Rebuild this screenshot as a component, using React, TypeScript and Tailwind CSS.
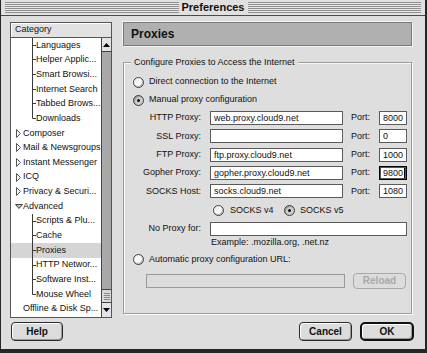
import React from "react";

const STRIPES =
  "h-[11px] flex-1 bg-[repeating-linear-gradient(to_bottom,#8f8f8f_0px,#8f8f8f_1px,#e8e8e8_1px,#e8e8e8_2px)]";

function Radio({ checked }: { checked?: boolean }) {
  return (
    <span
      className={
        "w-[11px] h-[11px] rounded-full border border-[#3c3c3c] flex items-center justify-center shrink-0 " +
        (checked
          ? "bg-[#cdcdcd] shadow-[inset_1px_1px_0_#9a9a9a]"
          : "bg-[#f6f6f6] shadow-[inset_-1px_-1px_0_#bdbdbd]")
      }
    >
      {checked && <span className="w-[3px] h-[3px] rounded-full bg-[#111]" />}
    </span>
  );
}

function Field({
  w,
  text,
  focused,
  disabled,
}: {
  w: string;
  text?: string;
  focused?: boolean;
  disabled?: boolean;
}) {
  return (
    <div
      className={
        w +
        " h-[14px] border flex items-center pl-[3px] text-[9px] leading-[12px] text-[#111] whitespace-nowrap overflow-hidden " +
        (focused
          ? "border-black shadow-[inset_0_0_0_1px_#555] bg-white"
          : disabled
          ? "border-[#9a9a9a] bg-[#dcdcdc]"
          : "border-[#5a5a5a] bg-white")
      }
    >
      {text}
      {focused && <span className="w-px h-[10px] bg-black ml-[1px]" />}
    </div>
  );
}

type Row = { t: string; k: "c" | "cl" | "p" | "o" | "n"; sel?: boolean };
const ROWS: Row[] = [
  { t: "Languages", k: "c" },
  { t: "Helper Applic...", k: "c" },
  { t: "Smart Browsi...", k: "c" },
  { t: "Internet Search", k: "c" },
  { t: "Tabbed Brows...", k: "c" },
  { t: "Downloads", k: "cl" },
  { t: "Composer", k: "p" },
  { t: "Mail & Newsgroups", k: "p" },
  { t: "Instant Messenger", k: "p" },
  { t: "ICQ", k: "p" },
  { t: "Privacy & Securi...", k: "p" },
  { t: "Advanced", k: "o" },
  { t: "Scripts & Plu...", k: "c" },
  { t: "Cache", k: "c" },
  { t: "Proxies", k: "c", sel: true },
  { t: "HTTP Networ...", k: "c" },
  { t: "Software Inst...", k: "c" },
  { t: "Mouse Wheel", k: "cl" },
  { t: "Offline & Disk Sp...", k: "n" },
];

function TreeRow({ r }: { r: Row }) {
  let lead: React.ReactNode = null;
  if (r.k === "c" || r.k === "cl") {
    lead = (
      <svg width="25" height="15" className="shrink-0">
        <line x1="21.5" y1="0" x2="21.5" y2={r.k === "cl" ? 7.5 : 15} stroke="#3a3a3a" strokeWidth="1" />
        <line x1="21.5" y1="7.5" x2="25" y2="7.5" stroke="#3a3a3a" strokeWidth="1" />
      </svg>
    );
  } else if (r.k === "p") {
    lead = (
      <svg width="12" height="15" className="shrink-0">
        <path d="M5.5 3.5 L9.5 7.5 L5.5 11.5 Z" fill="#f4f4f4" stroke="#555" strokeWidth="1" />
      </svg>
    );
  } else if (r.k === "o") {
    lead = (
      <svg width="12" height="15" className="shrink-0">
        <path d="M4.5 5.5 L11.5 5.5 L8 9.5 Z" fill="#bdbdbd" stroke="#444" strokeWidth="1" />
      </svg>
    );
  } else {
    lead = <span className="w-[12px] shrink-0" />;
  }
  return (
    <div
      className={
        "h-[14.67px] flex items-center whitespace-nowrap overflow-hidden text-[9px] text-[#111] " +
        (r.sel ? "bg-[#d5d5d5]" : "")
      }
    >
      {lead}
      <span>{r.t}</span>
    </div>
  );
}

function Btn({
  label,
  w,
  def,
}: {
  label: string;
  w: string;
  def?: boolean;
}) {
  return (
    <div
      className={
        w +
        " flex items-center justify-center font-bold text-[10px] text-[#111] bg-[#dcdcdc] " +
        (def
          ? "h-[19px] rounded-[5px] border-2 border-[#111] shadow-[inset_1px_1px_0_#fff,inset_-1px_-1px_0_#9a9a9a]"
          : "h-[19px] rounded-[4px] border border-[#2a2a2a] shadow-[inset_1px_1px_0_#fff,inset_-1px_-1px_0_#999]")
      }
    >
      {label}
    </div>
  );
}

function ProxyRow({
  label,
  host,
  port,
  focused,
}: {
  label: string;
  host: string;
  port: string;
  focused?: boolean;
}) {
  return (
    <div className="h-[18.33px] flex items-center">
      <span className="w-[78px] text-right text-[9px] text-[#111] pr-[1px]">{label}</span>
      <span className="w-[8px]" />
      <Field w="w-[133px]" text={host} />
      <span className="w-[8px]" />
      <span className="w-[28px] text-[9px] text-[#111]">Port:</span>
      <Field w="w-[28px]" text={port} focused={focused} />
    </div>
  );
}

export default function App() {
  return (
    <div className="w-[427px] h-[353px] flex flex-col bg-[#dedede] border-l border-r-2 border-b-[4px] border-[#262626] font-['Liberation_Sans',Arial,sans-serif] overflow-hidden">
      {/* title bar */}
      <div className="h-[16px] shrink-0 flex items-center pl-[4px] pr-[4px] border-b border-[#4a4a4a] bg-[#e0e0e0]">
        <div className={STRIPES} />
        <span className="px-[3px] text-[11px] font-bold leading-[15px] text-[#111]">Preferences</span>
        <div className={STRIPES} />
      </div>

      {/* body */}
      <div className="flex-1 flex flex-col pl-[9px] pr-[11px] pt-[6px]">
        <div className="flex gap-[11px] mr-[2px]">
          {/* category list */}
          <div className="w-[102px] h-[296px] border border-[#555] flex flex-col bg-white">
            <div className="h-[15px] shrink-0 border-b border-[#555] bg-[#e2e2e2] shadow-[inset_1px_1px_0_#fff] text-[9px] text-[#111] pl-[4px] flex items-center">
              Category
            </div>
            <div className="flex-1 flex">
              <div className="w-[90px] flex flex-col overflow-hidden">
                {ROWS.map((r) => (
                  <TreeRow key={r.t} r={r} />
                ))}
              </div>
              <div className="flex-1 border-l border-[#444] flex flex-col">
                <div className="h-[14px] border-b border-[#444] bg-[#e4e4e4] flex items-center justify-center">
                  <svg width="7" height="4">
                    <path d="M3.5 0 L7 4 L0 4 Z" fill="#000" />
                  </svg>
                </div>
                <div className="flex-1 bg-[#a9a9a9]" />
                <div className="h-[14px] border-y border-[#444] bg-[#d9d9d9] flex flex-col items-center justify-center gap-[1px]">
                  <span className="w-[6px] h-px bg-[#8a8a8a]" />
                  <span className="w-[6px] h-px bg-[#8a8a8a]" />
                  <span className="w-[6px] h-px bg-[#8a8a8a]" />
                  <span className="w-[6px] h-px bg-[#8a8a8a]" />
                </div>
                <div className="h-[14px] bg-[#e4e4e4] flex items-center justify-center">
                  <svg width="7" height="4">
                    <path d="M0 0 L7 0 L3.5 4 Z" fill="#000" />
                  </svg>
                </div>
              </div>
            </div>
          </div>

          {/* right panel */}
          <div className="flex-1 flex flex-col">
            <div className="h-[24px] bg-[#b0b0b0] border border-[#7a7a7a] shadow-[1px_1px_0_#f4f4f4,-1px_-1px_0_#f4f4f4] flex items-center pl-[7px] text-[12px] font-bold text-[#111]">
              Proxies
            </div>
            <div className="relative mt-[16px] h-[252px] border border-[#9c9c9c] shadow-[inset_1px_1px_0_#fafafa,1px_1px_0_#fafafa] flex flex-col pl-[9px] pt-[10px]">
              <span className="absolute left-[7px] top-[-7px] px-[3px] bg-[#dedede] text-[9px] leading-[12px] text-[#111]">
                Configure Proxies to Access the Internet
              </span>
              <div className="h-[18px] flex items-center gap-[5px] text-[9px] text-[#111]">
                <Radio />
                <span>Direct connection to the Internet</span>
              </div>
              <div className="h-[18px] flex items-center gap-[5px] text-[9px] text-[#111]">
                <Radio checked />
                <span>Manual proxy configuration</span>
              </div>
              <div className="-ml-[9px] flex flex-col">
                <ProxyRow label="HTTP Proxy:" host="web.proxy.cloud9.net" port="8000" />
                <ProxyRow label="SSL Proxy:" host="" port="0" />
                <ProxyRow label="FTP Proxy:" host="ftp.proxy.cloud9.net" port="1000" />
                <ProxyRow label="Gopher Proxy:" host="gopher.proxy.cloud9.net" port="9800" focused />
                <ProxyRow label="SOCKS Host:" host="socks.cloud9.net" port="1080" />
                <div className="h-[20px] flex items-center pl-[89px] text-[9px] text-[#111]">
                  <Radio />
                  <span className="ml-[6px] w-[54px]">SOCKS v4</span>
                  <Radio checked />
                  <span className="ml-[5px]">SOCKS v5</span>
                </div>
                <div className="h-[16px] flex items-center">
                  <span className="w-[78px] text-right text-[9px] text-[#111] pr-[1px]">No Proxy for:</span>
                  <span className="w-[8px]" />
                  <Field w="w-[197px]" />
                </div>
                <div className="h-[12px] flex items-center pl-[87px] text-[9px] text-[#111]">
                  Example: .mozilla.org, .net.nz
                </div>
              </div>
              <div className="mt-[2px] h-[18px] flex items-center gap-[5px] text-[9px] text-[#111]">
                <Radio />
                <span>Automatic proxy configuration URL:</span>
              </div>
              <div className="mt-[4px] h-[16px] flex items-center pl-[13px]">
                <Field w="w-[199px]" disabled />
                <div className="ml-[8px] w-[53px] h-[16px] rounded-[4px] border border-[#a8a8a8] bg-[#dcdcdc] flex items-center justify-center text-[10px] font-bold text-[#a9a9a9]">
                  Reload
                </div>
              </div>
            </div>
          </div>
        </div>

        {/* bottom buttons */}
        <div className="mt-[4px] h-[19px] flex items-center">
          <div className="ml-[1px]">
            <Btn label="Help" w="w-[52px]" />
          </div>
          <div className="flex-1" />
          <Btn label="Cancel" w="w-[53px]" />
          <div className="w-[8px]" />
          <Btn label="OK" w="w-[54px]" def />
        </div>
      </div>
    </div>
  );
}
